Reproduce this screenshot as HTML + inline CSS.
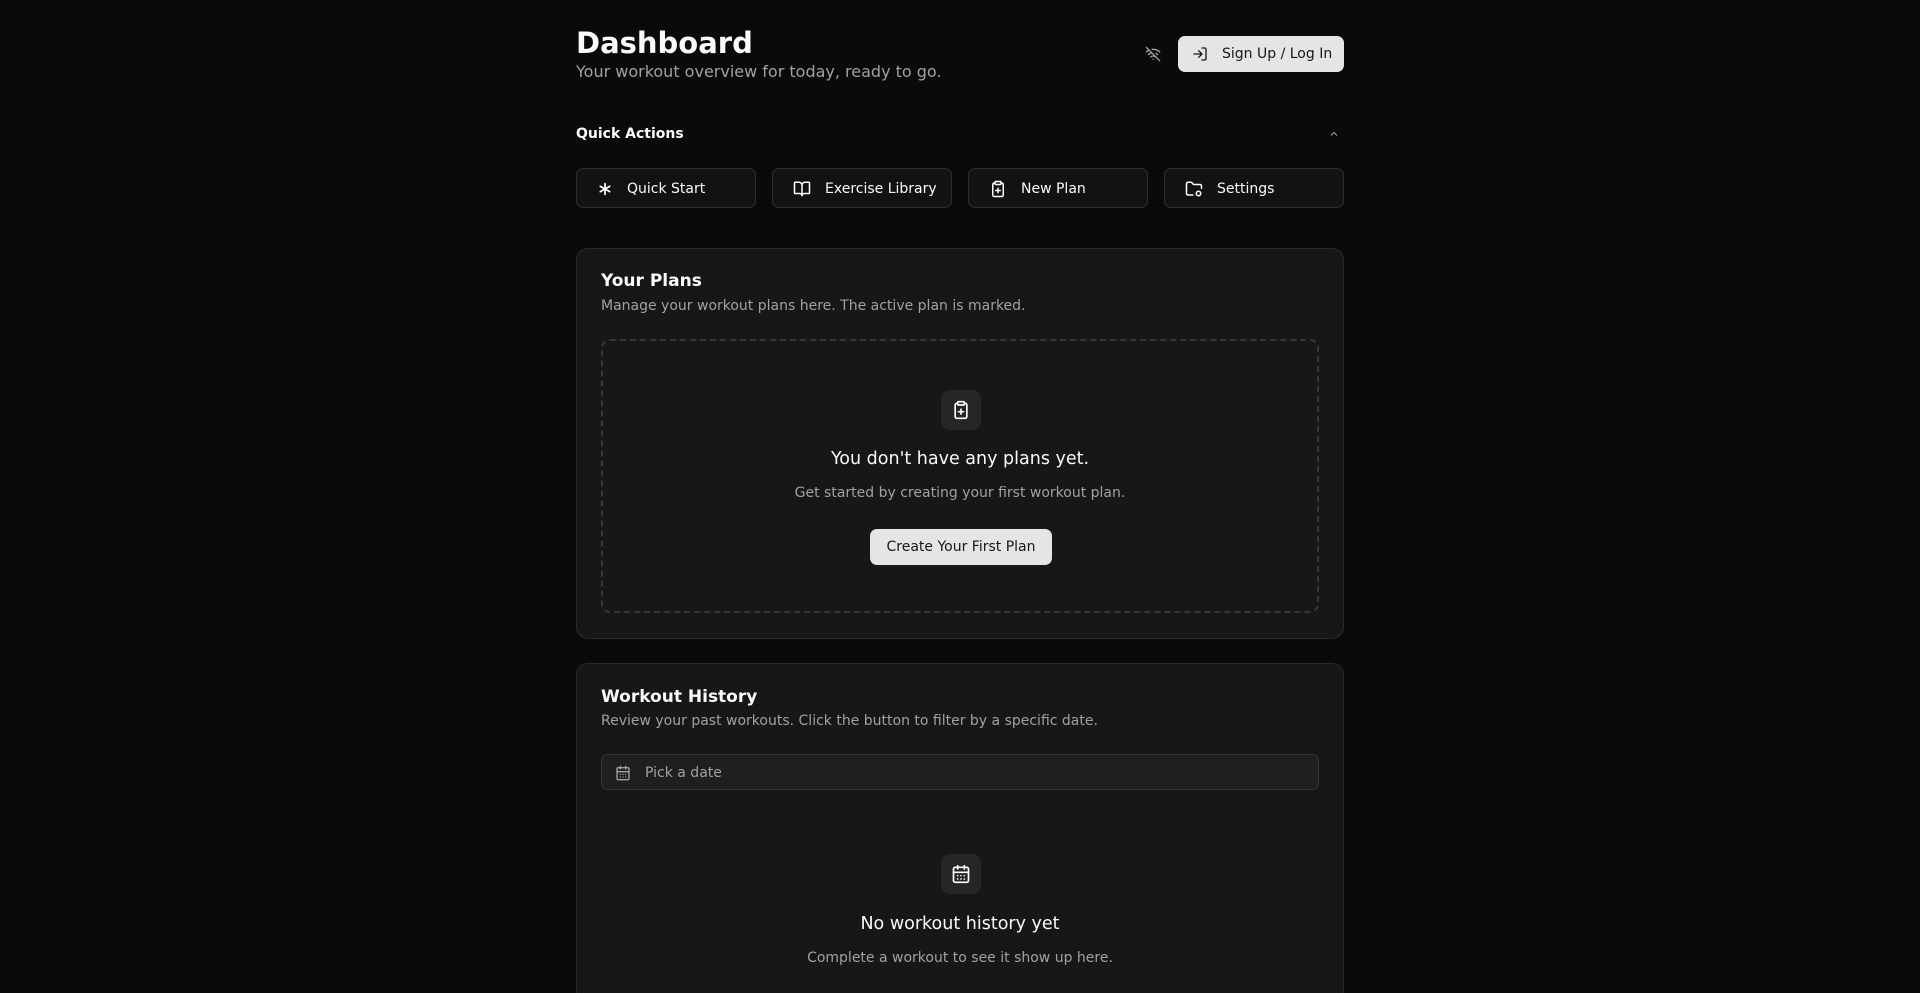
<!DOCTYPE html>
<html><head><meta charset="utf-8"><style>
*{box-sizing:border-box;margin:0;padding:0}
html,body{background:#0a0a0a;width:1920px;height:993px;overflow:hidden}
body{color:#fafafa;font-family:"DejaVu Sans","Liberation Sans",sans-serif}
.clip{position:relative;width:1920px;height:993px;overflow:hidden}
.wrap{position:absolute;left:576px;width:768px;top:0}
svg{display:block}
.abs{position:absolute}
h1{position:absolute;left:0;top:25px;font-size:29px;font-weight:700;line-height:36px}
.sub{position:absolute;left:0;top:61px;font-size:16px;color:#a1a1a1;line-height:22px}
.signin{position:absolute;right:0;top:36px;width:166px;height:36px;background:#e5e5e5;border-radius:7px;color:#171717;font-size:14px;display:flex;align-items:center;padding-left:14px}
.signin span{margin-left:14px}
.qa{position:absolute;left:0;top:126px;font-size:14px;font-weight:700}
.btns{position:absolute;top:168px;left:0;display:flex;gap:16px}
.btn{width:180px;height:40px;border:1px solid #2e2e2e;background:#121212;border-radius:7px;display:flex;align-items:center;padding-left:20px;font-size:14px;padding-top:1px}
.btn span{margin-left:14px}
.card{position:absolute;left:0;width:768px;background:#171717;border:1px solid #2a2a2a;border-radius:12px}
.ct{position:absolute;left:24px;font-size:17px;font-weight:700}
.cd{position:absolute;left:24px;font-size:14px;color:#a1a1a1}
.ib{position:absolute;left:364px;width:40px;height:40px;background:#262626;border-radius:9px;display:flex;align-items:center;justify-content:center}
.et{position:absolute;left:0;width:100%;text-align:center;font-size:18px}
.ed{position:absolute;left:0;width:100%;text-align:center;font-size:14px;color:#a1a1a1}
</style></head><body><div class="clip">
<div class="wrap">
<h1>Dashboard</h1>
<div class="sub">Your workout overview for today, ready to go.</div>
<svg class="abs" style="left:569px;top:46px" width="16" height="16" viewBox="0 0 24 24" fill="none" stroke="#a1a1a1" stroke-width="2" stroke-linecap="round"><path d="M12 20h.01M8.5 16.4a5 5 0 0 1 7 0M5 12.9a10 10 0 0 1 5.2-2.7M19 12.9a10 10 0 0 0-2.5-1.7M2 8.8a15 15 0 0 1 4.2-2.6M22 8.8A15 15 0 0 0 10.7 5M2 2l20 20"/></svg>
<div class="signin"><svg width="16" height="16" viewBox="0 0 24 24" fill="none" stroke="#171717" stroke-width="2" stroke-linecap="round" stroke-linejoin="round"><path d="M15 3h4a2 2 0 0 1 2 2v14a2 2 0 0 1-2 2h-4M10 17l5-5-5-5M15 12H3"/></svg><span>Sign Up / Log In</span></div>
<div class="qa">Quick Actions</div>
<svg class="abs" style="left:752px;top:128px" width="12" height="12" viewBox="0 0 24 24" fill="none" stroke="#a1a1a1" stroke-width="2"><path d="M6 15l6-6 6 6"/></svg>
<div class="btns">
<div class="btn"><svg width="16" height="16" viewBox="0 0 24 24" fill="none" stroke="#fff" stroke-width="2.6" stroke-linecap="round"><path d="M12 4v16M5 8l14 8M19 8L5 16"/></svg><span>Quick Start</span></div>
<div class="btn"><svg width="18" height="18" viewBox="0 0 24 24" fill="none" stroke="#fff" stroke-width="2" stroke-linejoin="round"><path d="M12 7v14M3 18a1 1 0 0 1-1-1V4a1 1 0 0 1 1-1h5a4 4 0 0 1 4 4 4 4 0 0 1 4-4h5a1 1 0 0 1 1 1v13a1 1 0 0 1-1 1h-6a3 3 0 0 0-3 3 3 3 0 0 0-3-3z"/></svg><span>Exercise Library</span></div>
<div class="btn"><svg width="18" height="18" viewBox="0 0 24 24" fill="none" stroke="#fff" stroke-width="2" stroke-linecap="round"><rect x="8" y="2" width="8" height="4" rx="1"/><path d="M16 4h1a2 2 0 0 1 2 2v14a2 2 0 0 1-2 2H7a2 2 0 0 1-2-2V6a2 2 0 0 1 2-2h1M9 14h6M12 11v6"/></svg><span>New Plan</span></div>
<div class="btn"><svg width="18" height="18" viewBox="0 0 24 24" fill="none" stroke="#fff" stroke-width="2" stroke-linecap="round" stroke-linejoin="round"><path d="M10.5 20H4a2 2 0 0 1-2-2V5a2 2 0 0 1 2-2h3.9a2 2 0 0 1 1.7.9l.8 1.2a2 2 0 0 0 1.7.9H20a2 2 0 0 1 2 2v3"/><circle cx="18" cy="18" r="3"/></svg><span>Settings</span></div>
</div>
<div class="card" style="top:248px;height:391px">
<div class="ct" style="top:22px">Your Plans</div>
<div class="cd" style="top:49px">Manage your workout plans here. The active plan is marked.</div>
<div class="abs" style="left:24px;top:90px;width:718px;height:274px;border:2px dashed #363636;border-radius:9px">
<div class="ib" style="left:338px;top:49px"><svg width="20" height="20" viewBox="0 0 24 24" fill="none" stroke="#fff" stroke-width="2" stroke-linecap="round"><rect x="8" y="2" width="8" height="4" rx="1"/><path d="M16 4h1a2 2 0 0 1 2 2v14a2 2 0 0 1-2 2H7a2 2 0 0 1-2-2V6a2 2 0 0 1 2-2h1M9 14h6M12 11v6"/></svg></div>
<div class="et" style="top:108px;font-size:17.5px">You don't have any plans yet.</div>
<div class="ed" style="top:144px">Get started by creating your first workout plan.</div>
<div class="abs" style="left:267px;top:188px;width:182px;height:36px;background:#e5e5e5;border-radius:7px;color:#171717;font-size:14px;text-align:center;line-height:37px">Create Your First Plan</div>
</div>
</div>
<div class="card" style="top:663px;height:360px">
<div class="ct" style="top:23px">Workout History</div>
<div class="cd" style="top:49px">Review your past workouts. Click the button to filter by a specific date.</div>
<div class="abs" style="left:24px;top:90px;width:718px;height:36px;background:#1f1f1f;border:1px solid #363636;border-radius:7px;display:flex;align-items:center;padding-left:13px;font-size:14px;color:#a1a1a1;padding-top:1px"><svg width="16" height="16" viewBox="0 0 24 24" fill="none" stroke="#a1a1a1" stroke-width="2" stroke-linecap="round"><rect x="3" y="4" width="18" height="18" rx="2"/><path d="M8 2v4M16 2v4M3 10h18M8 14h.01M12 14h.01M16 14h.01M8 18h.01M12 18h.01M16 18h.01"/></svg><span style="margin-left:14px">Pick a date</span></div>
<div class="ib" style="top:190px"><svg width="20" height="20" viewBox="0 0 24 24" fill="none" stroke="#fff" stroke-width="2" stroke-linecap="round"><rect x="3" y="4" width="18" height="18" rx="2"/><path d="M8 2v4M16 2v4M3 10h18M8 14h.01M12 14h.01M16 14h.01M8 18h.01M12 18h.01M16 18h.01"/></svg></div>
<div class="et" style="top:250px;font-size:17.5px">No workout history yet</div>
<div class="ed" style="top:286px">Complete a workout to see it show up here.</div>
</div>
</div>
</div></body></html>
